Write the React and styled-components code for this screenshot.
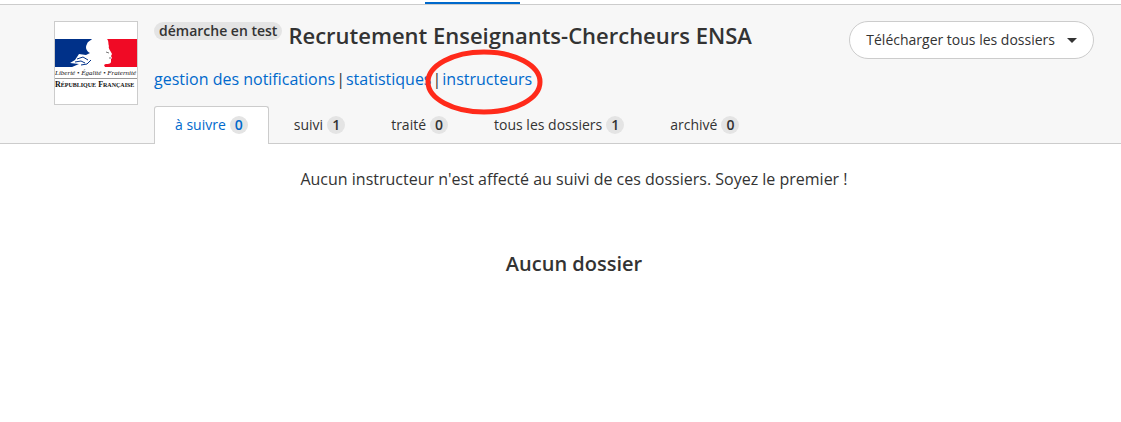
import React from "react";
import styled, { createGlobalStyle } from "styled-components";

const GlobalStyle = createGlobalStyle`
  *, *::before, *::after { box-sizing: border-box; }
  body {
    margin: 0;
    background: #fff;
    color: #333;
    font: 16px/20px "Open Sans", "Noto Sans", sans-serif;
  }
`;

const TopNav = styled.nav`
  display: flex;
  align-items: flex-end;
  height: 5px;
  padding-left: 425px;
  border-bottom: 1px solid #ccc;
`;

const ActiveMark = styled.span`
  width: 95px;
  height: 2px;
  background: #0069cc;
`;

const Header = styled.header`
  padding: 16px 27px 0 54px;
  background: #f7f7f7;
  border-bottom: 1px solid #ccc;
`;

const HeaderRow = styled.div`
  display: flex;
  align-items: flex-start;
  gap: 16px;
`;

const LogoFrame = styled.div`
  flex: none;
  width: 84px;
  height: 84px;
  background: #fff;
  border: 1px solid #ccc;

  svg { display: block; width: 100%; height: 100%; }
`;

const Info = styled.div`
  flex: 1;
  min-width: 0;
`;

const Heading = styled.div`
  display: flex;
  align-items: flex-start;
  gap: 6px;
  padding-top: 1px;
`;

const Badge = styled.span`
  display: inline-block;
  min-width: 18px;
  padding: 0 5px;
  border-radius: 9px;
  background: #e4e4e4;
  font-size: 14px;
  line-height: 18px;
  font-weight: 600;
  text-align: center;
  white-space: nowrap;
`;

const Title = styled.h1`
  margin: 0;
  font-size: 22px;
  line-height: 26px;
  font-weight: 600;
  white-space: nowrap;
`;

const Links = styled.p`
  display: flex;
  gap: 1px;
  margin: 21px 0 0;
`;

const Link = styled.a`
  color: #0069cc;
  text-decoration: none;
`;

const Circled = styled.span`
  position: relative;
`;

const Ring = styled.svg`
  position: absolute;
  top: -20px;
  left: -18px;
  width: 120px;
  height: 66px;
  pointer-events: none;
`;

const DownloadButton = styled.button`
  display: flex;
  align-items: center;
  gap: 12px;
  height: 38px;
  padding: 0 16px;
  border: 1px solid #ccc;
  border-radius: 19px;
  background: #fff;
  color: inherit;
  font: inherit;
  font-size: 14px;
  white-space: nowrap;
`;

const Caret = styled.span`
  border: solid transparent;
  border-width: 5px 5px 0;
  border-top-color: #333;
`;

const Tabs = styled.ul`
  display: flex;
  gap: 4px;
  margin: 1px 0 -1px 100px;
  padding: 0;
  list-style: none;
`;

const Tab = styled.a`
  display: flex;
  align-items: center;
  gap: 4px;
  height: 38px;
  padding: 0 20px 1px;
  border: 1px solid ${(p) => (p.$active ? "#ccc" : "transparent")};
  border-bottom: 0;
  border-radius: 3px 3px 0 0;
  background: ${(p) => (p.$active ? "#fff" : "transparent")};
  color: ${(p) => (p.$active ? "#0069cc" : "#333")};
  font-size: 14px;
  text-decoration: none;
`;

const Content = styled.main`
  padding: 25px 27px 40px 54px;
  text-align: center;
`;

const Message = styled.p`
  margin: 0;
`;

const Empty = styled.h2`
  margin: 61px 0 0;
  font-size: 20px;
  line-height: 28px;
  font-weight: 600;
`;

const tabs = [
  ["à suivre", 0],
  ["suivi", 1],
  ["traité", 0],
  ["tous les dossiers", 1],
  ["archivé", 0],
];

function Logo() {
  return (
    <svg viewBox="0 0 82 82" role="img" aria-label="République Française">
      <rect y="17" width="48" height="28" fill="#003189" />
      <rect x="48" y="17" width="34" height="28" fill="#f00a25" />
      <path
        fill="#fff"
        d="M37 17H52C54 19 53 22 54 24C53 26 55 28 57 32L56 34L57 36L56 37L56 40C55 43 51 41 49 43L50 45H17L24 42L15 41L20 38L24 32L31 33L35 31C31 29 30 25 32 22C33 19 35 19 37 17Z"
      />
      <path
        fill="none"
        stroke="#003189"
        d="M22 37L28 35L33 38M20 40L26 39L30 41M26 43L32 42L36 38"
      />
      <path fill="none" stroke="#777" d="M51 30L54 31M54 36L56 36" />
      <text x="0" y="53" fontFamily="Liberation Serif, serif" fontSize="7" fontStyle="italic" fill="#111">
        Liberté • Égalité • Fraternité
      </text>
      <rect y="56" width="82" height="1" fill="#999" />
      <text x="0" y="65" fontFamily="Liberation Serif, serif" fontSize="8" fontWeight="700" fill="#111">
        R<tspan fontSize="6">ÉPUBLIQUE</tspan> F<tspan fontSize="6">RANÇAISE</tspan>
      </text>
    </svg>
  );
}

export default function App() {
  return (
    <>
      <GlobalStyle />
      <TopNav>
        <ActiveMark />
      </TopNav>
      <Header>
        <HeaderRow>
          <LogoFrame>
            <Logo />
          </LogoFrame>
          <Info>
            <Heading>
              <Badge>démarche en test</Badge>
              <Title>Recrutement Enseignants-Chercheurs ENSA</Title>
            </Heading>
            <Links>
              <Link href="#notifications">gestion des notifications</Link>|
              <Link href="#statistiques">statistiques</Link>|
              <Circled>
                <Link href="#instructeurs">instructeurs</Link>
                <Ring viewBox="0 0 120 66" aria-hidden="true">
                  <ellipse cx="60" cy="33" rx="56" ry="30" fill="none" stroke="#ff2a1a" strokeWidth="5" />
                </Ring>
              </Circled>
            </Links>
          </Info>
          <DownloadButton type="button">
            Télécharger tous les dossiers
            <Caret />
          </DownloadButton>
        </HeaderRow>
        <Tabs>
          {tabs.map(([label, count], i) => (
            <li key={label}>
              <Tab href="#dossiers" $active={i === 0}>
                {label}
                <Badge>{count}</Badge>
              </Tab>
            </li>
          ))}
        </Tabs>
      </Header>
      <Content>
        <Message>Aucun instructeur n'est affecté au suivi de ces dossiers. Soyez le premier !</Message>
        <Empty>Aucun dossier</Empty>
      </Content>
    </>
  );
}
